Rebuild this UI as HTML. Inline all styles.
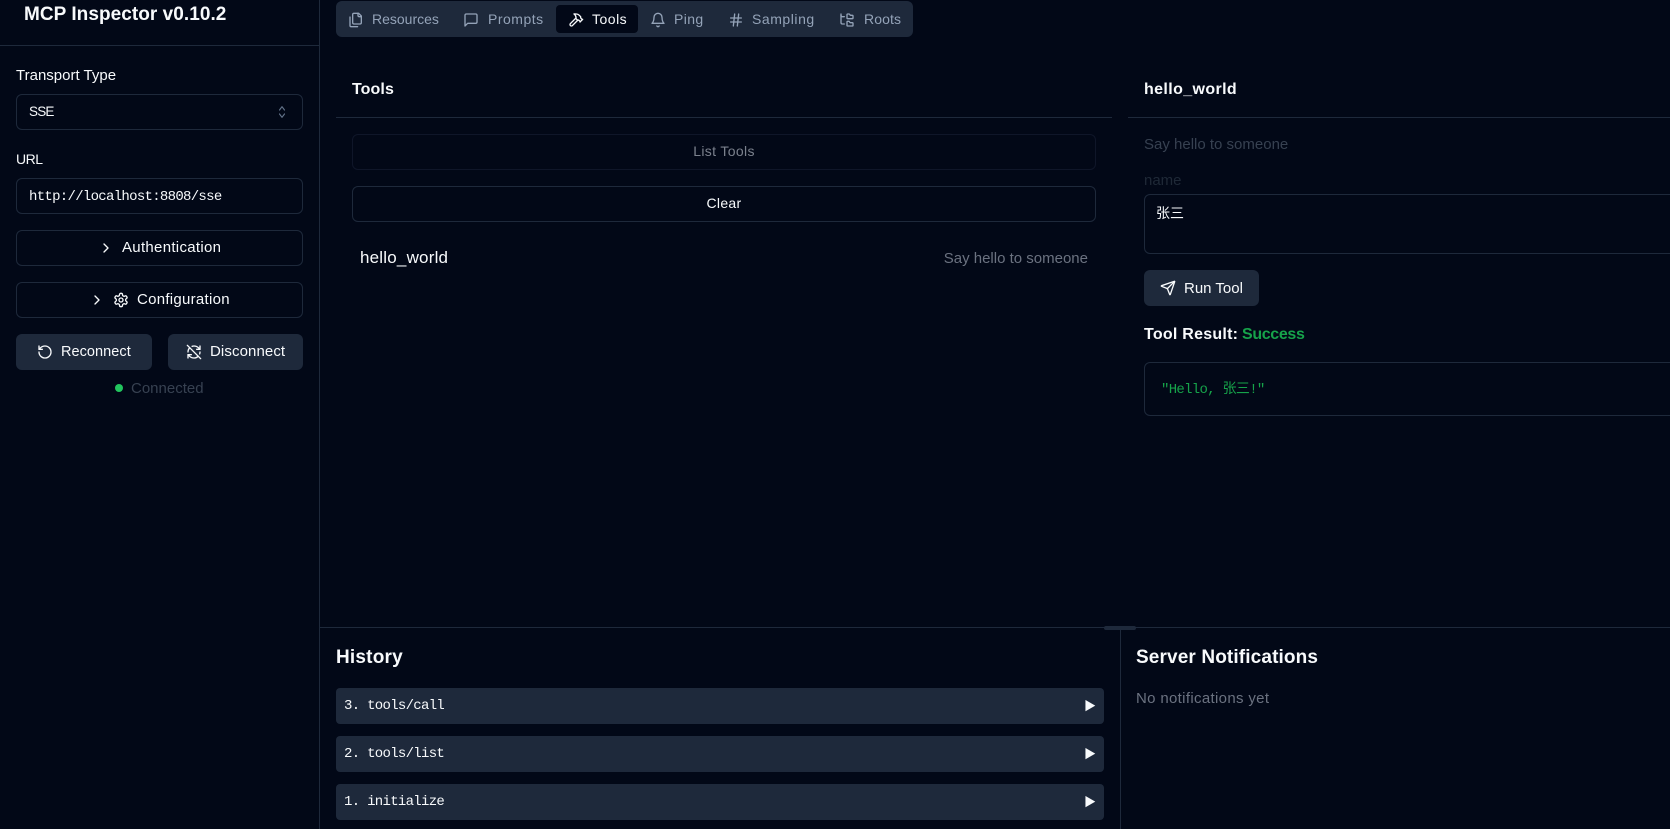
<!DOCTYPE html>
<html lang="en"><head><meta charset="utf-8"><title>MCP Inspector</title>
<style>
html,body{margin:0;padding:0;width:1670px;height:829px;overflow:hidden;background:#020817;color:#f8fafc;font-family:"Liberation Sans","Noto Sans CJK SC",sans-serif;font-size:14px}
.b{position:absolute;box-sizing:border-box}
.t{position:absolute;white-space:nowrap;line-height:20px;height:20px}
.m{font-family:"Liberation Mono","Noto Sans CJK SC",monospace;letter-spacing:-.7px}
.box{position:absolute;box-sizing:border-box;border:1px solid #1e293b;border-radius:6px}
.sec{position:absolute;background:#1e293b;border-radius:6px}
svg{position:absolute;fill:none;stroke:currentColor;stroke-width:2;stroke-linecap:round;stroke-linejoin:round}
.tab{color:#94a3b8}
.bold{font-weight:700}
</style></head><body>
<!-- lines -->
<div class="b" style="left:319px;top:0;width:1px;height:829px;background:#1e293b"></div>
<div class="b" style="left:0;top:45px;width:319px;height:1px;background:#1e293b"></div>
<div class="b" style="left:320px;top:627px;width:1350px;height:1px;background:#1e293b"></div>
<div class="b" style="left:1120px;top:627px;width:1px;height:202px;background:#1e293b"></div>
<div class="b" style="left:1104px;top:626px;width:32px;height:4px;background:#1e293b;border-radius:2px"></div>

<!-- sidebar -->
<div class="t bold" style="left:24px;top:5px;font-size:19px;letter-spacing:.05px">MCP Inspector v0.10.2</div>
<div class="t" style="left:16px;top:66px;font-size:15px">Transport Type</div>
<div class="box" style="left:16px;top:94px;width:287px;height:36px"></div>
<div class="t" style="left:29px;top:102px;font-size:13.5px;letter-spacing:-.8px">SSE</div>
<svg style="left:276px;top:104px;color:#64748b" width="12" height="16" viewBox="0 0 24 24" stroke-width="2" preserveAspectRatio="none"><path d="m7 15 5 5 5-5"/><path d="m7 9 5-5 5 5"/></svg>
<div class="t" style="left:16px;top:149px;letter-spacing:-.5px">URL</div>
<div class="box" style="left:16px;top:178px;width:287px;height:36px"></div>
<div class="t m" style="left:29px;top:187px">http://localhost:8808/sse</div>

<div class="box" style="left:16px;top:230px;width:287px;height:36px"></div>
<svg style="left:98px;top:240px" width="16" height="16" viewBox="0 0 24 24"><path d="m9 18 6-6-6-6"/></svg>
<div class="t" style="left:122px;top:238px;font-size:15px;letter-spacing:.3px">Authentication</div>

<div class="box" style="left:16px;top:282px;width:287px;height:36px"></div>
<svg style="left:89px;top:292px" width="16" height="16" viewBox="0 0 24 24"><path d="m9 18 6-6-6-6"/></svg>
<svg style="left:113px;top:292px" width="16" height="16" viewBox="0 0 24 24"><path d="M12.22 2h-.44a2 2 0 0 0-2 2v.18a2 2 0 0 1-1 1.73l-.43.25a2 2 0 0 1-2 0l-.15-.08a2 2 0 0 0-2.73.73l-.22.38a2 2 0 0 0 .73 2.73l.15.1a2 2 0 0 1 1 1.72v.51a2 2 0 0 1-1 1.74l-.15.09a2 2 0 0 0-.73 2.73l.22.38a2 2 0 0 0 2.73.73l.15-.08a2 2 0 0 1 2 0l.43.25a2 2 0 0 1 1 1.73V20a2 2 0 0 0 2 2h.44a2 2 0 0 0 2-2v-.18a2 2 0 0 1 1-1.73l.43-.25a2 2 0 0 1 2 0l.15.08a2 2 0 0 0 2.73-.73l.22-.39a2 2 0 0 0-.73-2.73l-.15-.08a2 2 0 0 1-1-1.74v-.5a2 2 0 0 1 1-1.74l.15-.09a2 2 0 0 0 .73-2.73l-.22-.38a2 2 0 0 0-2.73-.73l-.15.08a2 2 0 0 1-2 0l-.43-.25a2 2 0 0 1-1-1.73V4a2 2 0 0 0-2-2z"/><circle cx="12" cy="12" r="3"/></svg>
<div class="t" style="left:137px;top:290px;font-size:15px;letter-spacing:.28px">Configuration</div>

<div class="sec" style="left:16px;top:334px;width:136px;height:36px"></div>
<svg style="left:37px;top:344px" width="16" height="16" viewBox="0 0 24 24"><path d="M3 12a9 9 0 1 0 9-9 9.75 9.75 0 0 0-6.74 2.74L3 8"/><path d="M3 3v5h5"/></svg>
<div class="t" style="left:61px;top:342px;font-size:14.5px;letter-spacing:.05px">Reconnect</div>
<div class="sec" style="left:168px;top:334px;width:135px;height:36px"></div>
<svg style="left:186px;top:344px" width="16" height="16" viewBox="0 0 24 24"><path d="M21 8L18.74 5.74A9.75 9.75 0 0 0 12 3C11 3 10.03 3.16 9.13 3.47"/><path d="M8 16H3v5"/><path d="M3 12C3 9.51 4 7.26 5.64 5.64"/><path d="m3 16 2.26 2.26A9.75 9.75 0 0 0 12 21c2.49 0 4.74-1 6.36-2.64"/><path d="M21 12c0 1-.16 1.97-.47 2.87"/><path d="M21 3v5h-5"/><path d="M22 22 2 2"/></svg>
<div class="t" style="left:210px;top:342px;font-size:15px;letter-spacing:.1px">Disconnect</div>
<div class="b" style="left:115px;top:384px;width:8px;height:8px;border-radius:50%;background:#22c55e"></div>
<div class="t" style="left:131px;top:379px;color:#374151;font-size:15px">Connected</div>

<!-- tabs -->
<div class="sec" style="left:336px;top:1px;width:577px;height:36px"></div>
<div class="b" style="left:556px;top:5px;width:82px;height:28px;background:#020817;border-radius:4px"></div>
<svg class="tab" style="left:348px;top:12px" width="16" height="16" viewBox="0 0 24 24"><path d="M20 7h-3a2 2 0 0 1-2-2V2"/><path d="M9 18a2 2 0 0 1-2-2V4a2 2 0 0 1 2-2h7l4 4v10a2 2 0 0 1-2 2Z"/><path d="M3 7.6v12.8A1.6 1.6 0 0 0 4.6 22h9.8"/></svg>
<div class="t tab" style="left:372px;top:9px;letter-spacing:0">Resources</div>
<svg class="tab" style="left:463px;top:12px" width="16" height="16" viewBox="0 0 24 24"><path d="M21 15a2 2 0 0 1-2 2H7l-4 4V5a2 2 0 0 1 2-2h14a2 2 0 0 1 2 2z"/></svg>
<div class="t tab" style="left:488px;top:9px;letter-spacing:.5px">Prompts</div>
<svg style="left:568px;top:12px" width="16" height="16" viewBox="0 0 24 24"><path d="m15 12-8.373 8.373a1 1 0 1 1-3-3L12 9"/><path d="m18 15 4-4"/><path d="m21.5 11.5-1.914-1.914A2 2 0 0 1 19 8.172V7l-2.26-2.26a6 6 0 0 0-4.202-1.756L9 2.96l.92.82A6.18 6.18 0 0 1 12 8.4V10l2 2h1.172a2 2 0 0 1 1.414.586L18.5 14.5"/></svg>
<div class="t" style="left:592px;top:9px;letter-spacing:.5px">Tools</div>
<svg class="tab" style="left:650px;top:12px" width="16" height="16" viewBox="0 0 24 24"><path d="M6 8a6 6 0 0 1 12 0c0 7 3 9 3 9H3s3-2 3-9"/><path d="M10.3 21a1.94 1.94 0 0 0 3.4 0"/></svg>
<div class="t tab" style="left:674px;top:9px;letter-spacing:.4px">Ping</div>
<svg class="tab" style="left:728px;top:12px" width="16" height="16" viewBox="0 0 24 24"><path d="M4 9h16"/><path d="M4 15h16"/><path d="M10 3 8 21"/><path d="M16 3l-2 18"/></svg>
<div class="t tab" style="left:752px;top:9px;letter-spacing:.55px">Sampling</div>
<svg class="tab" style="left:839px;top:12px" width="16" height="16" viewBox="0 0 24 24"><path d="M20 10a1 1 0 0 0 1-1V6a1 1 0 0 0-1-1h-2.5a1 1 0 0 1-.8-.4l-.9-1.2A1 1 0 0 0 15 3h-2a1 1 0 0 0-1 1v5a1 1 0 0 0 1 1Z"/><path d="M20 21a1 1 0 0 0 1-1v-3a1 1 0 0 0-1-1h-2.9a1 1 0 0 1-.88-.55l-.42-.85a1 1 0 0 0-.92-.6H13a1 1 0 0 0-1 1v5a1 1 0 0 0 1 1Z"/><path d="M3 5a2 2 0 0 0 2 2h3"/><path d="M3 3v13a2 2 0 0 0 2 2h3"/></svg>
<div class="t tab" style="left:864px;top:9px;letter-spacing:.1px">Roots</div>

<!-- tools panel -->
<div class="t bold" style="left:352px;top:80px;font-size:16px;letter-spacing:.1px">Tools</div>
<div class="b" style="left:336px;top:117px;width:776px;height:1px;background:#1e293b"></div>
<div class="box" style="left:352px;top:134px;width:744px;height:36px;border-color:#0f1629"></div>
<div class="t" style="left:352px;width:744px;text-align:center;top:141px;color:#7b818d;letter-spacing:.35px">List Tools</div>
<div class="box" style="left:352px;top:186px;width:744px;height:36px"></div>
<div class="t" style="left:352px;width:744px;text-align:center;top:193px;letter-spacing:.3px">Clear</div>
<div class="t" style="left:360px;top:248px;font-size:17px;letter-spacing:.2px">hello_world</div>
<div class="t" style="right:582px;top:249px;color:#6b7280;font-size:15px">Say hello to someone</div>

<!-- detail panel -->
<div class="t bold" style="left:1144px;top:80px;font-size:16px;letter-spacing:.38px">hello_world</div>
<div class="b" style="left:1128px;top:117px;width:542px;height:1px;background:#1e293b"></div>
<div class="t" style="left:1144px;top:135px;color:#374151;font-size:15px">Say hello to someone</div>
<div class="t" style="left:1144px;top:171px;color:#1f2937;font-size:15px">name</div>
<div class="box" style="left:1144px;top:194px;width:540px;height:60px"></div>
<div class="t" style="left:1156px;top:203px">张三</div>
<div class="sec" style="left:1144px;top:270px;width:115px;height:36px"></div>
<svg style="left:1160px;top:280px" width="16" height="16" viewBox="0 0 24 24"><path d="M14.536 21.686a.5.5 0 0 0 .937-.024l6.5-19a.496.496 0 0 0-.635-.635l-19 6.5a.5.5 0 0 0-.024.937l7.93 3.18a2 2 0 0 1 1.112 1.11z"/><path d="m21.854 2.147-10.94 10.939"/></svg>
<div class="t" style="left:1184px;top:279px;font-size:15px">Run Tool</div>
<div class="t bold" style="left:1144px;top:325px;font-size:16px;letter-spacing:.25px">Tool Result:</div>
<div class="t bold" style="left:1242px;top:325px;font-size:16px;letter-spacing:-.35px;color:#16a34a">Success</div>
<div class="box" style="left:1144px;top:362px;width:540px;height:54px"></div>
<div class="t m" style="left:1161px;top:380px;color:#16a34a">"Hello, 张三!"</div>

<!-- history -->
<div class="t bold" style="left:336px;top:648px;font-size:19px;letter-spacing:.2px">History</div>
<div class="sec" style="left:336px;top:688px;width:768px;height:36px;border-radius:4px"></div>
<div class="t m" style="left:344px;top:696px">3. tools/call</div>
<div class="t" style="left:1084px;top:696px;font-size:12px">▶</div>
<div class="sec" style="left:336px;top:736px;width:768px;height:36px;border-radius:4px"></div>
<div class="t m" style="left:344px;top:744px">2. tools/list</div>
<div class="t" style="left:1084px;top:744px;font-size:12px">▶</div>
<div class="sec" style="left:336px;top:784px;width:768px;height:36px;border-radius:4px"></div>
<div class="t m" style="left:344px;top:792px">1. initialize</div>
<div class="t" style="left:1084px;top:792px;font-size:12px">▶</div>

<div class="t bold" style="left:1136px;top:648px;font-size:19px;letter-spacing:.13px">Server Notifications</div>
<div class="t" style="left:1136px;top:689px;color:#6b7280;font-size:15px;letter-spacing:.33px">No notifications yet</div>
</body></html>
